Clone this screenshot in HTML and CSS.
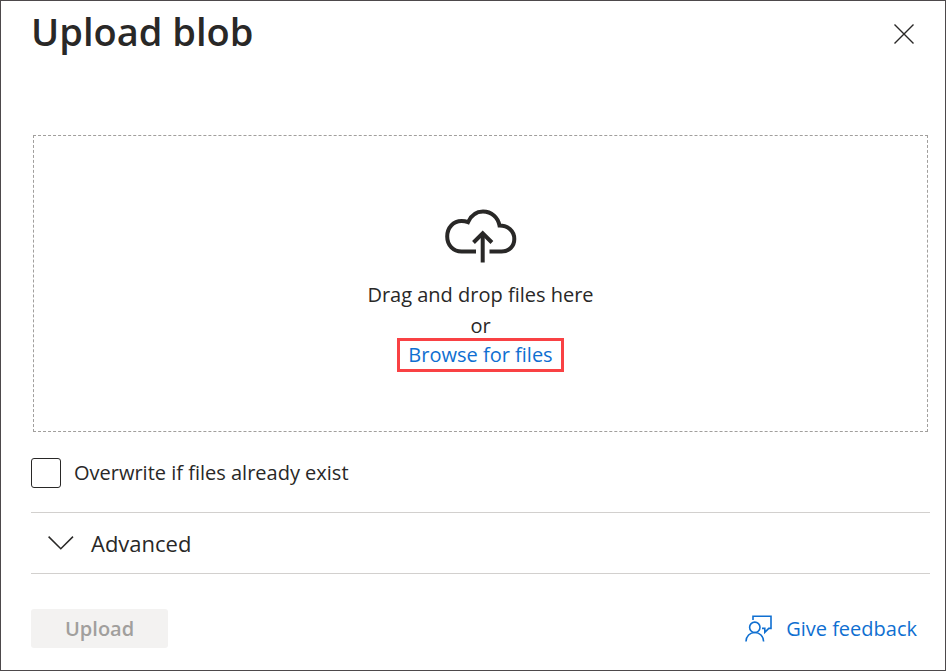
FILE: index.html
```html
<!DOCTYPE html>
<html lang="en">
<head>
<meta charset="utf-8">
<title>Upload blob</title>
<meta name="viewport" content="width=device-width, initial-scale=1">
<link rel="stylesheet" href="styles.css">
</head>
<body>
<main class="panel">
  <header class="panel-header">
    <h1 class="title">Upload blob</h1>
    <button class="close" type="button" aria-label="Close">
      <svg width="20" height="20" viewBox="0 0 20 20" fill="none" stroke="currentColor" stroke-width="1.4"><path d="M.5.5l19 19M19.5.5l-19 19"/></svg>
    </button>
  </header>
  <section class="dropzone">
    <svg class="cloud" width="72" height="54" viewBox="0 0 72 54" fill="none" stroke="currentColor" stroke-width="4" aria-hidden="true">
      <path d="M31 42.500H16.500C8.500 42.500 2.200 36.500 2.200 27.500 2.200 18.500 8.500 12 16.500 12Q20 12 23 13.200C26 6.500 31.500 2.500 38 2.500 46.500 2.500 53 8.500 54.500 16.500 63 16.500 69.300 22 69.300 30 69.300 37.500 64 42.500 56.500 42.500H44.500"/>
      <path d="M37.700 53.500V25"/>
      <path d="M28.500 33.500L37.700 24.300 46.900 33.500"/>
    </svg>
    <p class="line">Drag and drop files here</p>
    <p class="line">or</p>
    <a class="browse" href="#">Browse for files</a>
  </section>
  <div class="option">
    <input class="checkbox" type="checkbox" id="overwrite">
    <label for="overwrite">Overwrite if files already exist</label>
  </div>
  <button class="advanced" type="button" aria-expanded="false">
    <svg width="26" height="14" viewBox="0 0 26 14" fill="none" stroke="currentColor" stroke-width="1.5" aria-hidden="true"><path d="M.6.6L12.800 12.800 25 .6"/></svg>
    <span>Advanced</span>
  </button>
  <footer class="panel-footer">
    <button class="upload" type="button" disabled>Upload</button>
    <a class="feedback" href="#">
      <svg width="28" height="27" viewBox="0 0 28 27" fill="none" stroke="currentColor" stroke-width="1.600" aria-hidden="true">
        <path d="M8 5V1.300H26V13.400H23.800L19.800 17.400V13.400H17"/>
        <circle cx="9.800" cy="12.300" r="5.200"/>
        <path d="M1 26.500C1 21.300 5 17.500 9.800 17.500S18.600 21.300 18.600 26.500"/>
      </svg>
      <span>Give feedback</span>
    </a>
  </footer>
</main>
</body>
</html>
```
FILE: styles.css
```css
* {
  box-sizing: border-box;
}

body {
  margin: 0;
  background: #fff;
  color: #292827;
  font: 20px/31px "Open Sans", "Noto Sans", sans-serif;
}

button {
  font: inherit;
  color: inherit;
  border: 0;
  background: none;
  cursor: pointer;
}

a {
  color: #0f6fd1;
  text-decoration: none;
}

svg {
  display: block;
  flex: none;
}

.panel {
  display: flex;
  flex-direction: column;
  min-height: 100vh;
  padding: 0 15px 22px 30px;
  border: 1px solid #4d494b;
}

.panel-header {
  display: flex;
  align-items: flex-start;
  justify-content: space-between;
  padding: 4px 16px 0 0;
}

.title {
  margin: 0;
  font-size: 38px;
  font-weight: 600;
  line-height: 52px;
}

.close {
  margin-top: 19px;
  padding: 0;
}

.dropzone {
  display: flex;
  flex-direction: column;
  align-items: center;
  flex: 1;
  margin: 78px 2px 0;
  padding: 73px 0 58px;
  border: 1px dashed #a19f9d;
}

.cloud {
  margin-bottom: 16px;
}

.line {
  margin: 0;
}

.browse {
  margin-top: -3px;
  padding: 0 8px;
  border: 3px solid #f94144;
  line-height: 28px;
}

.option {
  display: flex;
  align-items: center;
  gap: 13px;
  padding: 26px 0 24px;
  line-height: 30px;
}

.checkbox {
  appearance: none;
  width: 30px;
  height: 30px;
  margin: 0;
  border: 1px solid #292827;
  border-radius: 3px;
}

.checkbox:checked {
  background: #0f6fd1;
}

.advanced {
  display: flex;
  align-items: center;
  gap: 17px;
  height: 62px;
  padding: 0 17px;
  border: solid #d2d0ce;
  border-width: 1px 0;
  font-size: 22px;
}

.panel-footer {
  display: flex;
  align-items: center;
  justify-content: space-between;
  padding: 35px 13px 0 0;
}

.upload {
  padding: 4px 34px;
  border-radius: 3px;
  background: #f3f2f1;
  color: #a19f9d;
  font-weight: 600;
  cursor: default;
}

.feedback {
  display: flex;
  align-items: center;
  gap: 13px;
}
```
